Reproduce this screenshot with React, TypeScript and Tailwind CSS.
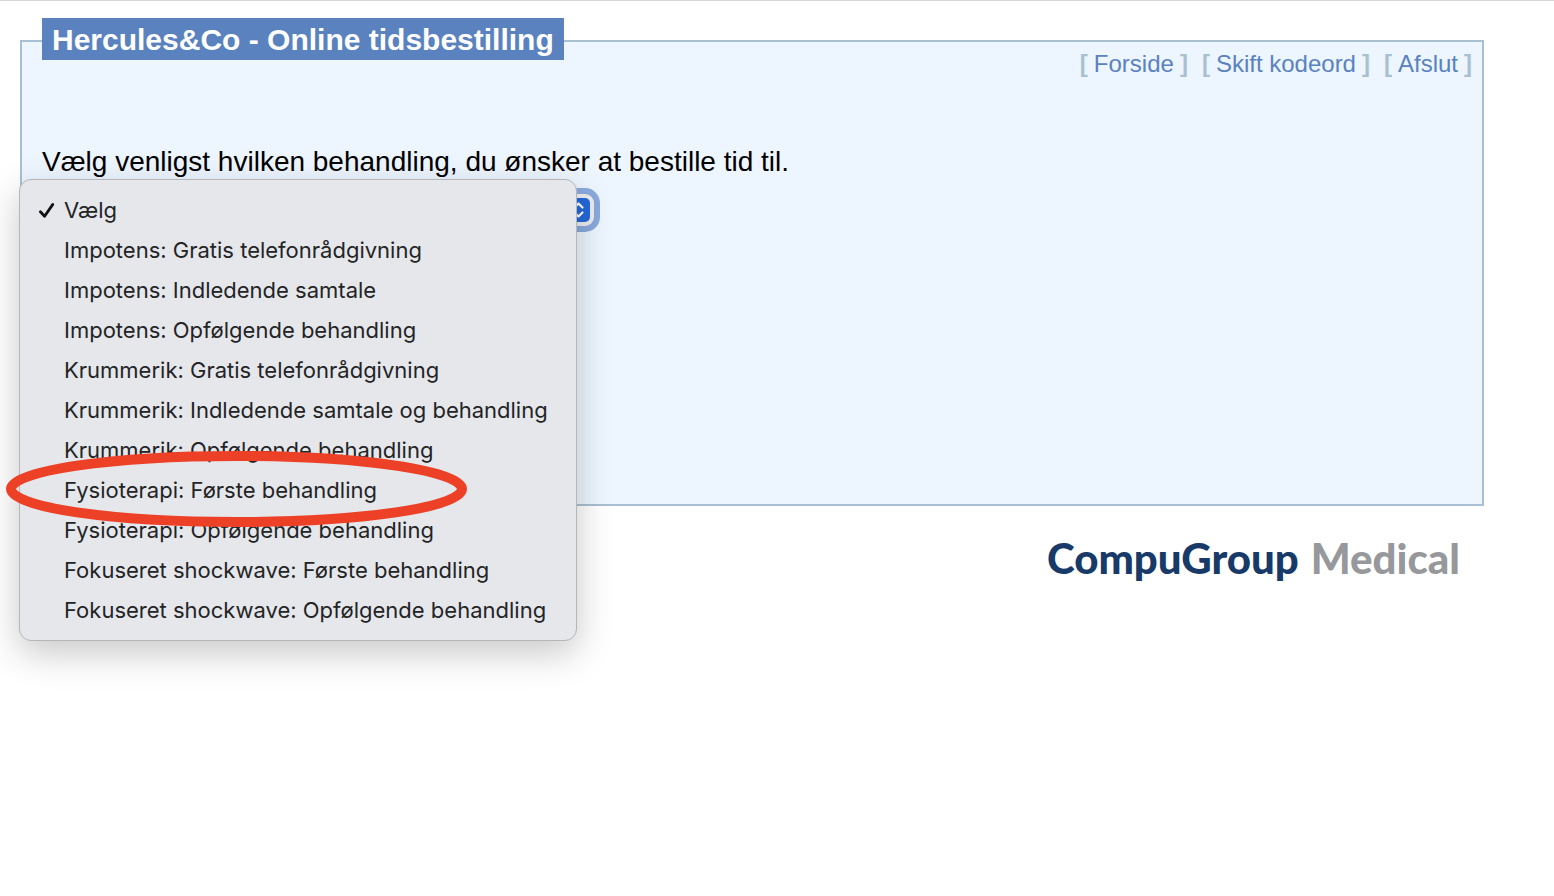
import React, { useState } from 'react';

interface TreatmentMenuProps {
  options: string[];
  selected: string;
  marked: string;
  onSelect: (value: string) => void;
}

const treatments = [
  'Vælg',
  'Impotens: Gratis telefonrådgivning',
  'Impotens: Indledende samtale',
  'Impotens: Opfølgende behandling',
  'Krummerik: Gratis telefonrådgivning',
  'Krummerik: Indledende samtale og behandling',
  'Krummerik: Opfølgende behandling',
  'Fysioterapi: Første behandling',
  'Fysioterapi: Opfølgende behandling',
  'Fokuseret shockwave: Første behandling',
  'Fokuseret shockwave: Opfølgende behandling'
];

const links = ['Forside', 'Skift kodeord', 'Afslut'];

const CheckMark: React.FC = () => (
  <svg viewBox="0 0 18 18" className="w-[18px] h-[18px]" fill="none" aria-hidden="true">
    <path d="M3.4 10.8 L7.6 15.2 L15.8 3.4" stroke="#111" strokeWidth="2.8" strokeLinecap="round" strokeLinejoin="round" />
  </svg>
);

const TreatmentMenu: React.FC<TreatmentMenuProps> = ({ options, selected, marked, onSelect }) => (
  <ul className="absolute -left-[23px] -top-[15px] w-[558px] py-[10px] rounded-xl border border-[#b4b6ba] bg-[#e6e7eb] shadow-[0_12px_36px_rgba(0,0,0,0.22)] font-['Inter',sans-serif] text-[22px] text-[#232426]">
    {options.map((option) => (
      <li key={option} className="relative">
        <button
          type="button"
          onClick={() => onSelect(option)}
          className="flex w-full h-10 items-center pl-[17px] text-left whitespace-nowrap"
        >
          <span className="flex w-[27px] shrink-0">{option === selected && <CheckMark />}</span>
          {option}
        </button>
        {option === marked && (
          <svg
            viewBox="0 0 461 76"
            className="absolute -left-[14px] -top-[19px] z-10 w-[461px] h-[76px] pointer-events-none"
            fill="none"
            aria-hidden="true"
          >
            <ellipse cx="230.5" cy="38" rx="225.5" ry="33" stroke="#ed4127" strokeWidth="10" />
          </svg>
        )}
      </li>
    ))}
  </ul>
);

const App: React.FC = () => {
  const [treatment, setTreatment] = useState(treatments[0]);

  return (
    <div className="min-h-screen bg-white border-t border-[#d8d8d8] pl-5 pr-[70px] pt-[39px] font-['Liberation_Sans',Arial,sans-serif]">
      <main className="min-h-[466px] border-2 border-[#a9c0d2] bg-[#edf5ff] px-5">
        <header className="flex items-start justify-between">
          <h1 className="-mt-6 h-[42px] px-[10px] bg-[#5a82bf] text-white text-[30px] leading-[44px] font-bold whitespace-nowrap">
            Hercules&amp;Co - Online tidsbestilling
          </h1>
          <nav className="-mr-[10px] mt-[6px] flex gap-[14px] text-2xl leading-8 text-[#5a82bf]">
            {links.map((link) => (
              <span key={link} className="flex gap-[6px]">
                <span className="font-bold text-[#a9c0cf]">[</span>
                <a href="#" className="hover:underline">{link}</a>
                <span className="font-bold text-[#a9c0cf]">]</span>
              </span>
            ))}
          </nav>
        </header>

        <form className="mt-[66px]">
          <label htmlFor="treatment" className="block text-[28px] leading-8 text-black">
            Vælg venligst hvilken behandling, du ønsker at bestille tid til.
          </label>
          <div className="relative mt-4 w-[552px]">
            <select
              id="treatment"
              value={treatment}
              onChange={(e) => setTreatment(e.target.value)}
              className="block w-full h-8 rounded-[9px] appearance-none bg-[#ededef] px-3 text-lg ring-6 ring-[#8aaadd] outline-none"
            >
              {treatments.map((option) => (
                <option key={option} value={option}>{option}</option>
              ))}
            </select>
            <svg viewBox="0 0 24 24" className="absolute right-1 top-1 w-6 h-6 pointer-events-none" fill="none" aria-hidden="true">
              <rect width="24" height="24" rx="5" fill="#2468d9" />
              <path d="M8.5 9.5 L12.5 5.5 L16.5 9.5 M8.5 14.5 L12.5 18.5 L16.5 14.5" stroke="#fff" strokeWidth="2.2" strokeLinecap="round" strokeLinejoin="round" />
            </svg>
            <TreatmentMenu
              options={treatments}
              selected={treatment}
              marked="Fysioterapi: Første behandling"
              onSelect={setTreatment}
            />
          </div>
        </form>
      </main>

      <footer className="mt-7 pr-6 flex justify-end gap-3 font-['Lato',sans-serif] text-[42px] leading-[48px] font-black whitespace-nowrap">
        <span className="text-[#173a68]">CompuGroup</span>
        <span className="text-[#96989c]">Medical</span>
      </footer>
    </div>
  );
};

export default App;
